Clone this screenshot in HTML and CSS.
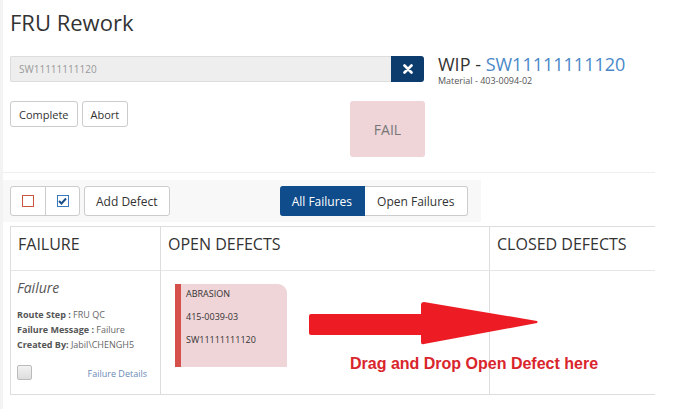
FILE: index.html
```html
<!DOCTYPE html>
<html>
<head>
<meta charset="utf-8">
<link rel="stylesheet" href="styles.css">
</head>
<body>
<div class="page">
  <h1 class="title">FRU Rework</h1>
  <div class="top">
    <div class="left">
      <div class="input-group">
        <div class="input">SW11111111120</div>
        <button class="clear-btn"><svg width="10" height="10" viewBox="0 0 10 10"><path d="M1.5 1.5 L8.5 8.5 M8.5 1.5 L1.5 8.5" stroke="#fff" stroke-width="2.6" stroke-linecap="round"/></svg></button>
      </div>
      <div class="actions">
        <div class="btns">
          <button class="btn">Complete</button>
          <button class="btn">Abort</button>
        </div>
        <div class="fail">FAIL</div>
      </div>
    </div>
    <div class="wip">
      <div class="wip-title">WIP - <span class="wip-num">SW11111111120</span></div>
      <div class="material">Material - 403-0094-02</div>
    </div>
  </div>
  <div class="divider"></div>
  <div class="toolbar">
    <div class="group">
      <span class="gbtn"><span class="cb"></span></span>
      <span class="gbtn"><span class="cb checked"><svg width="9" height="8" viewBox="0 0 9 8"><path d="M1 4 L3.5 6.5 L8 1.5" stroke="#1a4f8a" stroke-width="2" fill="none"/></svg></span></span>
    </div>
    <button class="btn add">Add Defect</button>
    <div class="tabs">
      <span class="tab active">All Failures</span>
      <span class="tab">Open Failures</span>
    </div>
  </div>
  <div class="board">
    <div class="table">
      <div class="th c1">FAILURE</div>
      <div class="th c2">OPEN DEFECTS</div>
      <div class="th c3">CLOSED DEFECTS</div>
      <div class="td c1">
        <div class="f-title">Failure</div>
        <div class="meta"><b>Route Step :</b> FRU QC</div>
        <div class="meta"><b>Failure Message :</b> Failure</div>
        <div class="meta"><b>Created By:</b> Jabil\CHENGH5</div>
        <div class="f-foot">
          <span class="box"></span>
          <span class="link">Failure Details</span>
        </div>
      </div>
      <div class="td c2">
        <div class="card">
          <div>ABRASION</div>
          <div>415-0039-03</div>
          <div>SW11111111120</div>
        </div>
      </div>
      <div class="td c3"></div>
    </div>
    <svg class="arrow" width="232" height="44" viewBox="0 0 232 44"><path d="M2 12 Q0 12 0 14 L0 31 Q0 33 2 33 L112 33 L112 40 Q112 43 115 42 L228 21 Q229 20 228 19 L115 0 Q112 0 112 3 L112 12 Z" fill="#ed1c24"/></svg>
    <div class="hint">Drag and Drop Open Defect here</div>
  </div>
</div>
</body>
</html>
```
FILE: styles.css
```css
* { box-sizing: border-box; }
body {
  margin: 0;
  font-family: "Open Sans", "Liberation Sans", sans-serif;
  color: #333;
  background: #fff;
}
.page {
  border-left: 3px solid #f3f3f3;
  min-height: 409px;
  padding: 0 0 0 7px;
}
.title {
  margin: 0;
  padding-top: 6px;
  font-weight: 400;
  font-size: 22px;
  line-height: 32px;
  color: #333;
}
.top {
  display: flex;
  margin-top: 18px;
}
.left { width: 414px; }
.input-group { display: flex; height: 26px; }
.input {
  flex: 1;
  background: #eee;
  border: 1px solid #ddd;
  border-right: none;
  border-radius: 2px 0 0 2px;
  font-size: 10px;
  line-height: 24px;
  padding-left: 8px;
  color: #999;
}
.clear-btn {
  width: 33px;
  border: none;
  background: #0c3c6e;
  border-radius: 0 3px 3px 0;
  display: flex;
  align-items: center;
  justify-content: center;
  padding: 0;
}
.actions {
  display: flex;
  justify-content: space-between;
  margin-top: 19px;
}
.btns { display: flex; gap: 4px; align-items: flex-start; }
.btn {
  font-family: "Open Sans", "Liberation Sans", sans-serif;
  font-size: 11px;
  color: #333;
  background: #fff;
  border: 1px solid #ccc;
  border-radius: 3px;
  height: 26px;
  padding: 0 8px;
}
.fail {
  width: 75px;
  height: 56px;
  background: #efd4d8;
  border-radius: 3px;
  color: #777;
  font-size: 14px;
  display: flex;
  align-items: center;
  justify-content: center;
  margin-right: -1px;
}
.wip { margin-left: 14px; margin-top: -4px; }
.wip-title { font-size: 18px; line-height: 24px; color: #333; }
.wip-num { color: #4a88c8; }
.material { font-size: 9px; color: #555; line-height: 12px; margin-top: -1px; }
.divider {
  border-top: 1px solid #eee;
  margin: 15px 0 0 -7px;
  width: 652px;
}
.toolbar {
  margin: 7px 0 0 -7px;
  width: 478px;
  background: #f8f8f8;
  height: 42px;
  display: flex;
  align-items: center;
  padding-left: 7px;
}
.group {
  display: flex;
  border: 1px solid #ccc;
  border-radius: 3px;
  background: #fff;
  height: 30px;
}
.gbtn {
  width: 34px;
  display: flex;
  align-items: center;
  justify-content: center;
}
.gbtn + .gbtn { border-left: 1px solid #ccc; }
.cb {
  width: 12px;
  height: 12px;
  border: 1px solid #c9553a;
  background: #fff;
  display: flex;
  align-items: center;
  justify-content: center;
}
.cb.checked { border-color: #3a78c0; }
.btn.add {
  margin-left: 4px;
  height: 30px;
  font-size: 12px;
  padding: 0 11px;
}
.tabs {
  display: flex;
  margin-left: 110px;
  height: 30px;
}
.tab {
  display: flex;
  align-items: center;
  font-size: 12px;
  padding: 0 12px;
  border: 1px solid #ccc;
  background: #fff;
  color: #333;
  border-radius: 0 3px 3px 0;
  border-left: none;
}
.tab.active {
  background: #0f4c8b;
  color: #fff;
  border-color: #0f4c8b;
  border-radius: 3px 0 0 3px;
}
.board { position: relative; margin-top: 4px; }
.table {
  display: grid;
  grid-template-columns: 149px 329px 166px;
  width: 645px;
  border-top: 1px solid #ddd;
  border-bottom: 1px solid #ddd;
  border-left: 1px solid #ddd;
}
.th {
  height: 44px;
  font-size: 16px;
  padding: 6px 0 0 7px;
  border-bottom: 1px solid #e6e6e6;
  color: #333;
}
.c2, .c3 { border-left: 1px solid #ddd; }
.td { height: 123px; }
.td.c1 { padding: 7px 0 0 6px; }
.f-title { font-size: 14px; font-style: italic; color: #555; line-height: 19px; }
.meta { font-size: 9px; line-height: 15px; color: #666; }
.f-title + .meta { margin-top: 10px; }
.meta b { color: #555; font-weight: 700; }
.f-foot {
  display: flex;
  justify-content: space-between;
  align-items: center;
  margin-top: 13px;
  padding-right: 13px;
}
.box {
  width: 15px;
  height: 15px;
  border: 1px solid #bbb;
  border-radius: 2px;
  background: linear-gradient(#f2f2f2, #ddd);
}
.link { font-size: 9px; color: #6a8ab8; margin-top: 2px; }
.td.c2 { padding: 13px 0 0 14px; }
.card {
  width: 112px;
  height: 83px;
  background: #efd5d8;
  border-left: 6px solid #d5504b;
  border-radius: 0 9px 0 0;
  padding: 4px 0 0 5px;
  font-size: 9px;
  line-height: 12px;
  color: #333;
}
.card div + div { margin-top: 11px; }
.arrow { position: absolute; left: 299px; top: 76px; }
.hint {
  position: absolute;
  left: 340px;
  top: 129px;
  font-family: "Liberation Sans", Arial, sans-serif;
  font-weight: 700;
  font-size: 16px;
  color: #d9252b;
}
```
